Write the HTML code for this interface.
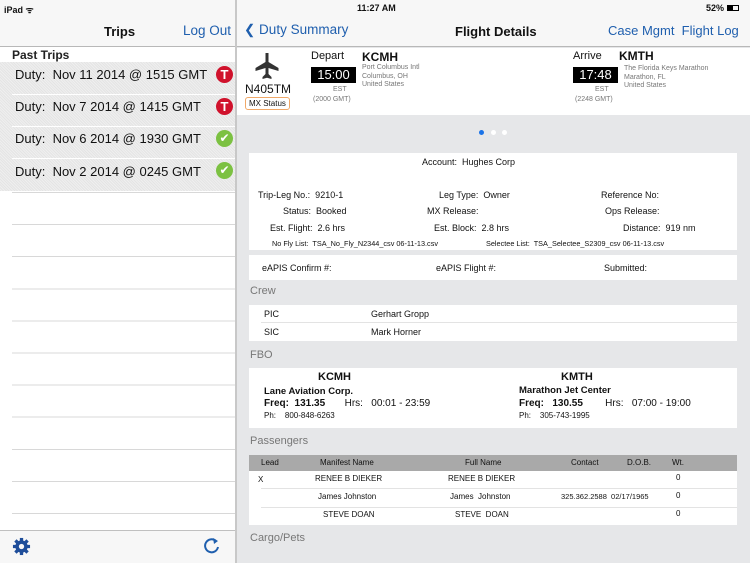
<!DOCTYPE html>
<html><head><meta charset="utf-8"><style>
*{margin:0;padding:0;box-sizing:border-box}
body{width:750px;height:563px;overflow:hidden;font-family:"Liberation Sans",sans-serif;background:#e6e7e9;position:relative;color:#111}
.a{position:absolute;white-space:nowrap}
.blue{color:#1f5fae}
.hatch{background:repeating-linear-gradient(45deg,#e4e4e4 0 1px,#efefef 1px 2px)}
.card{position:absolute;background:#fff;left:249px;width:488px}
.gr{color:#777}
.lbl{font-size:9px}
</style></head><body>
<div class="a" style="left:0;top:0;width:235px;height:563px;background:#fff"></div>
<div class="a" style="left:0;top:0;width:750px;height:47px;background:#f7f7f7;border-bottom:1px solid #b8b8b8"></div>
<div class="a" style="left:235px;top:0;width:2px;height:563px;background:#c8c8c8"></div>
<div class="a" style="left:4px;top:3px;font-size:9px;font-weight:bold">iPad ᯤ</div>
<div class="a" style="left:357px;top:3px;font-size:9px;font-weight:bold">11:27 AM</div>
<div class="a" style="left:706px;top:3px;font-size:9px;font-weight:bold">52%</div>
<div class="a" style="left:727px;top:5px;width:12px;height:6px;border:1px solid #000"><div style="width:5px;height:4px;background:#000"></div></div>
<div class="a" style="left:104px;top:24px;font-size:13px;font-weight:bold">Trips</div>
<div class="a blue" style="left:183px;top:23px;font-size:13.5px">Log Out</div>
<div class="a" style="left:12px;top:48px;font-size:12px;font-weight:bold;color:#222">Past Trips</div>
<div class="a hatch" style="left:0;top:62px;width:235px;height:129px"></div>
<div class="a" style="left:12px;top:94px;width:223px;height:1px;background:#fff"></div>
<div class="a" style="left:12px;top:126px;width:223px;height:1px;background:#fff"></div>
<div class="a" style="left:12px;top:158px;width:223px;height:1px;background:#fff"></div>
<div class="a" style="left:15px;top:67px;font-size:13px">Duty:&nbsp;&nbsp;Nov 11 2014 @ 1515 GMT</div>
<div class="a" style="left:15px;top:99px;font-size:13px">Duty:&nbsp;&nbsp;Nov 7 2014 @ 1415 GMT</div>
<div class="a" style="left:15px;top:131px;font-size:13px">Duty:&nbsp;&nbsp;Nov 6 2014 @ 1930 GMT</div>
<div class="a" style="left:15px;top:164px;font-size:13px">Duty:&nbsp;&nbsp;Nov 2 2014 @ 0245 GMT</div>
<div class="a" style="left:216px;top:66px;width:17px;height:17px;border-radius:50%;background:#d0122c;color:#fff;font-weight:bold;font-size:13px;text-align:center;line-height:17px">T</div>
<div class="a" style="left:216px;top:98px;width:17px;height:17px;border-radius:50%;background:#d0122c;color:#fff;font-weight:bold;font-size:13px;text-align:center;line-height:17px">T</div>
<div class="a" style="left:216px;top:130px;width:17px;height:17px;border-radius:50%;background:#7cc142;color:#fff;font-size:12px;text-align:center;line-height:17px">✔</div>
<div class="a" style="left:216px;top:162px;width:17px;height:17px;border-radius:50%;background:#7cc142;color:#fff;font-size:12px;text-align:center;line-height:17px">✔</div>
<div class="a" style="left:12px;top:192px;width:223px;height:321px;background:repeating-linear-gradient(180deg,#d8d8d8 0 1px,transparent 1px 32.1px)"></div>
<div class="a" style="left:12px;top:513px;width:223px;height:1px;background:#d8d8d8"></div>
<div class="a" style="left:0;top:530px;width:235px;height:33px;background:#f7f7f7;border-top:1px solid #c0c0c0"></div>
<svg class="a" style="left:12px;top:537px" width="19" height="19" viewBox="0 0 20 20"><g fill="#1f4e9a"><circle cx="10" cy="10" r="6.5"/><g stroke="#1f4e9a" stroke-width="3.5"><line x1="10" y1="1" x2="10" y2="19"/><line x1="1" y1="10" x2="19" y2="10"/><line x1="3.6" y1="3.6" x2="16.4" y2="16.4"/><line x1="16.4" y1="3.6" x2="3.6" y2="16.4"/></g></g><circle cx="10" cy="10" r="2.8" fill="#f7f7f7"/></svg>
<svg class="a" style="left:203px;top:537px" width="18" height="18" viewBox="0 0 18 18"><path d="M13 4 A6.5 6.5 0 1 0 15 10" fill="none" stroke="#1f5fae" stroke-width="2"/><path d="M10 1 L15 4 L11 7Z" fill="#1f5fae"/></svg>
<div class="a blue" style="left:244px;top:22px;font-size:13.5px">❮ Duty Summary</div>
<div class="a" style="left:455px;top:24px;font-size:13px;font-weight:bold">Flight Details</div>
<div class="a blue" style="left:608px;top:23px;font-size:13px">Case Mgmt&nbsp; Flight Log</div>
<div class="a" style="left:237px;top:48px;width:513px;height:67px;background:#fff"></div>
<svg class="a" style="left:254px;top:52px" width="26" height="28" viewBox="0 0 26 28"><path d="M11.5 1 h3 v9 l10 6 v3 l-10 -3 v6 l3 3 v2 l-4.5 -1.3 l-4.5 1.3 v-2 l3 -3 v-6 l-10 3 v-3 l10 -6z" fill="#333"/></svg>
<div class="a" style="left:245px;top:82px;font-size:12px">N405TM</div>
<div class="a" style="left:245px;top:97px;font-size:8px;border:1px solid #f0a868;border-radius:3px;padding:1px 3px">MX Status</div>
<div class="a" style="left:311px;top:50px;font-size:11px">Depart</div>
<div class="a" style="left:311px;top:67px;width:45px;height:16px;background:#000;color:#fff;font-size:13px;text-align:center;line-height:16px">15:00</div>
<div class="a gr" style="left:333px;top:86px;font-size:7px">EST</div>
<div class="a gr" style="left:313px;top:96px;font-size:7px">(2000 GMT)</div>
<div class="a" style="left:362px;top:50px;font-size:12px;font-weight:bold">KCMH</div>
<div class="a gr" style="left:362px;top:64px;font-size:7px;line-height:8.5px">Port Columbus Intl<br>Columbus, OH<br>United States</div>
<div class="a" style="left:573px;top:50px;font-size:11px">Arrive</div>
<div class="a" style="left:573px;top:67px;width:45px;height:16px;background:#000;color:#fff;font-size:13px;text-align:center;line-height:16px">17:48</div>
<div class="a gr" style="left:595px;top:86px;font-size:7px">EST</div>
<div class="a gr" style="left:575px;top:96px;font-size:7px">(2248 GMT)</div>
<div class="a" style="left:619px;top:49px;font-size:12px;font-weight:bold">KMTH</div>
<div class="a gr" style="left:624px;top:65px;font-size:7px;line-height:8.5px">The Florida Keys Marathon<br>Marathon, FL<br>United States</div>
<div class="a" style="left:479px;top:130px;width:5px;height:5px;border-radius:50%;background:#1a73e8"></div>
<div class="a" style="left:491px;top:130px;width:5px;height:5px;border-radius:50%;background:#fff"></div>
<div class="a" style="left:502px;top:130px;width:5px;height:5px;border-radius:50%;background:#fff"></div>
<div class="card" style="top:153px;height:97px"></div>
<div class="a lbl" style="left:422px;top:157px">Account:&nbsp; Hughes Corp</div>
<div class="a lbl" style="left:258px;top:190px">Trip-Leg No.:&nbsp; 9210-1</div>
<div class="a lbl" style="left:283px;top:206px">Status:&nbsp; Booked</div>
<div class="a lbl" style="left:270px;top:223px">Est. Flight:&nbsp; 2.6 hrs</div>
<div class="a lbl" style="left:439px;top:190px">Leg Type:&nbsp; Owner</div>
<div class="a lbl" style="left:427px;top:206px">MX Release:</div>
<div class="a lbl" style="left:434px;top:223px">Est. Block:&nbsp; 2.8 hrs</div>
<div class="a lbl" style="left:601px;top:190px">Reference No:</div>
<div class="a lbl" style="left:605px;top:206px">Ops Release:</div>
<div class="a lbl" style="left:623px;top:223px">Distance:&nbsp; 919 nm</div>
<div class="a" style="left:272px;top:239px;font-size:7.3px">No Fly List:&nbsp; TSA_No_Fly_N2344_csv 06-11-13.csv</div>
<div class="a" style="left:486px;top:239px;font-size:7.3px">Selectee List:&nbsp; TSA_Selectee_S2309_csv 06-11-13.csv</div>
<div class="card" style="top:255px;height:25px"></div>
<div class="a lbl" style="left:262px;top:263px">eAPIS Confirm #:</div>
<div class="a lbl" style="left:436px;top:263px">eAPIS Flight #:</div>
<div class="a lbl" style="left:604px;top:263px">Submitted:</div>
<div class="a gr" style="left:250px;top:285px;font-size:11px">Crew</div>
<div class="card" style="top:305px;height:36px"></div>
<div class="a" style="left:261px;top:322px;width:476px;height:1px;background:#e3e3e3"></div>
<div class="a lbl" style="left:264px;top:309px">PIC</div><div class="a lbl" style="left:371px;top:309px">Gerhart Gropp</div>
<div class="a lbl" style="left:264px;top:327px">SIC</div><div class="a lbl" style="left:371px;top:327px">Mark Horner</div>
<div class="a gr" style="left:250px;top:349px;font-size:11px">FBO</div>
<div class="card" style="top:368px;height:60px"></div>
<div class="a" style="left:318px;top:371px;font-size:11px;font-weight:bold">KCMH</div>
<div class="a" style="left:264px;top:386px;font-size:9.5px;font-weight:bold">Lane Aviation Corp.</div>
<div class="a" style="left:264px;top:398px;font-size:10px"><b>Freq:&nbsp; 131.35</b>&nbsp;&nbsp;&nbsp;&nbsp;&nbsp;&nbsp; Hrs:&nbsp;&nbsp; 00:01 - 23:59</div>
<div class="a" style="left:264px;top:411px;font-size:8px">Ph:&nbsp;&nbsp;&nbsp; 800-848-6263</div>
<div class="a" style="left:561px;top:371px;font-size:11px;font-weight:bold">KMTH</div>
<div class="a" style="left:519px;top:385px;font-size:9.5px;font-weight:bold">Marathon Jet Center</div>
<div class="a" style="left:519px;top:398px;font-size:10px"><b>Freq:&nbsp;&nbsp; 130.55</b>&nbsp;&nbsp;&nbsp;&nbsp;&nbsp;&nbsp;&nbsp; Hrs:&nbsp;&nbsp; 07:00 - 19:00</div>
<div class="a" style="left:519px;top:411px;font-size:8px">Ph:&nbsp;&nbsp;&nbsp; 305-743-1995</div>
<div class="a gr" style="left:250px;top:435px;font-size:11px">Passengers</div>
<div class="card" style="top:455px;height:70px"></div>
<div class="a" style="left:249px;top:455px;width:488px;height:16px;background:#a9a9a9"></div>
<div class="a" style="left:261px;top:488px;width:476px;height:1px;background:#e3e3e3"></div>
<div class="a" style="left:261px;top:507px;width:476px;height:1px;background:#e3e3e3"></div>
<div class="a" style="left:261px;top:458px;font-size:8px">Lead</div>
<div class="a" style="left:320px;top:458px;font-size:8px">Manifest Name</div>
<div class="a" style="left:465px;top:458px;font-size:8px">Full Name</div>
<div class="a" style="left:571px;top:458px;font-size:8px">Contact</div>
<div class="a" style="left:627px;top:458px;font-size:8px">D.O.B.</div>
<div class="a" style="left:672px;top:458px;font-size:8px">Wt.</div>
<div class="a" style="left:258px;top:475px;font-size:8px">X</div>
<div class="a" style="left:315px;top:474px;font-size:8px">RENEE B DIEKER</div>
<div class="a" style="left:448px;top:474px;font-size:8px">RENEE B DIEKER</div>
<div class="a" style="left:676px;top:473px;font-size:8px">0</div>
<div class="a" style="left:318px;top:492px;font-size:8px">James Johnston</div>
<div class="a" style="left:450px;top:492px;font-size:8px">James&nbsp; Johnston</div>
<div class="a" style="left:561px;top:492px;font-size:7.5px">325.362.2588&nbsp; 02/17/1965</div>
<div class="a" style="left:676px;top:491px;font-size:8px">0</div>
<div class="a" style="left:323px;top:510px;font-size:8px">STEVE DOAN</div>
<div class="a" style="left:455px;top:510px;font-size:8px">STEVE&nbsp; DOAN</div>
<div class="a" style="left:676px;top:509px;font-size:8px">0</div>
<div class="a gr" style="left:250px;top:532px;font-size:11px">Cargo/Pets</div>
</body></html>
